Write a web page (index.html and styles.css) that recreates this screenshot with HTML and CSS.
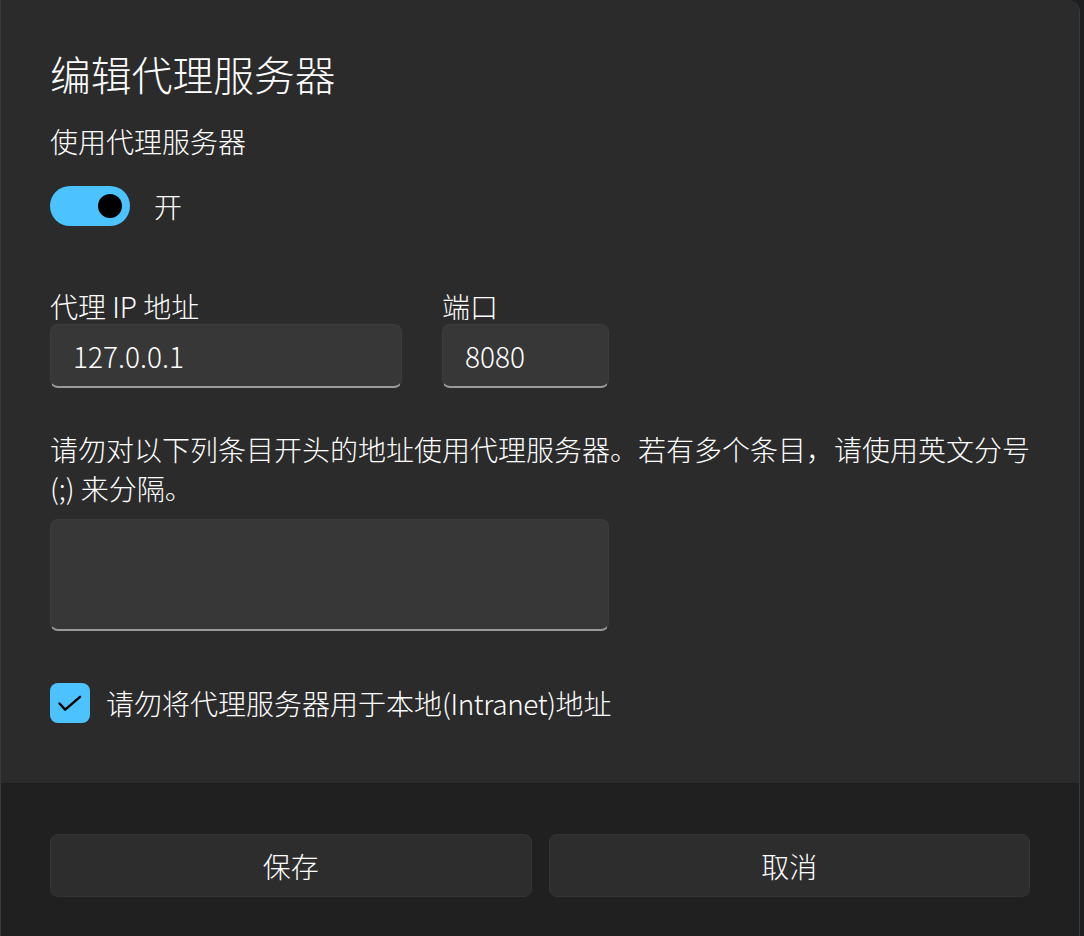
FILE: index.html
```html
<!DOCTYPE html>
<html lang="zh-CN">
<head>
    <meta charset="UTF-8">
    <title>编辑代理服务器</title>
    <link rel="stylesheet" href="styles.css">
</head>
<body>
<div class="dialog">
    <div class="content">
        <div class="title">编辑代理服务器</div>
        <div class="subTitle">使用代理服务器</div>
        <div class="toggleRow">
            <div class="toggle on"><span class="knob"></span></div>
            <span class="toggleText">开</span>
        </div>

        <div class="fields">
            <div class="field">
                <div class="label">代理 IP 地址</div>
                <div class="input ip">127.0.0.1</div>
            </div>
            <div class="field">
                <div class="label">端口</div>
                <div class="input port">8080</div>
            </div>
        </div>

        <div class="desc">请勿对以下列条目开头的地址使用代理服务器。若有多个条目，请使用英文分号 (;) 来分隔。</div>
        <div class="input area"></div>

        <div class="checkRow">
            <div class="checkbox">
                <svg width="40" height="40" viewBox="0 0 40 40">
                    <path d="M9.5 20.5 L15.2 26.6 L30 13.8" fill="none" stroke="#000" stroke-width="2.4" stroke-linecap="round" stroke-linejoin="round"/>
                </svg>
            </div>
            <span class="checkText">请勿将代理服务器用于本地<span class="latin">(Intranet)</span>地址</span>
        </div>
    </div>
    <div class="footer">
        <div class="btn">保存</div>
        <div class="btn">取消</div>
    </div>
</div>
</body>
</html>
```

FILE: styles.css
```css
html, body {
    margin: 0;
    height: 100%;
    background-color: #1b1f1f;
    overflow: hidden;
}

body {
    font-family: "Noto Sans CJK SC", "Noto Sans", sans-serif;
    font-weight: 300;
    color: #ffffff;
}

.dialog {
    width: 1078px;
    height: 100%;
    display: flex;
    flex-direction: column;
    background-color: #2b2b2b;
    border-left: 1px solid #3a3a3a;
    border-right: 1px solid #3a3a3a;
    border-top-right-radius: 12px;
    overflow: hidden;
}

.content {
    padding: 48px 49px 60px 49px;
}

.title {
    font-size: 40.8px;
    line-height: 52px;
}

.subTitle {
    margin-top: 21px;
    font-size: 28px;
    line-height: 40px;
}

.toggleRow {
    display: flex;
    align-items: center;
    gap: 24px;
    margin-top: 25px;
}

.toggle {
    width: 80px;
    height: 40px;
    border-radius: 20px;
    background-color: #4cc2ff;
    display: flex;
    align-items: center;
    justify-content: flex-end;
    padding-right: 8px;
    box-sizing: border-box;
}

.knob {
    width: 24px;
    height: 24px;
    border-radius: 50%;
    background-color: #000000;
}

.toggleText {
    font-size: 28px;
    line-height: 40px;
}

.fields {
    display: flex;
    gap: 40px;
    margin-top: 62px;
}

.label {
    font-size: 28px;
    line-height: 36px;
}

.input {
    box-sizing: border-box;
    height: 64px;
    padding-left: 22px;
    display: flex;
    align-items: center;
    font-size: 28px;
    background-color: #373737;
    border: 1px solid #3c3c3c;
    border-bottom: 2px solid #9a9a9a;
    border-radius: 8px;
}

.ip {
    width: 352px;
}

.port {
    width: 167px;
}

.desc {
    margin-top: 42px;
    font-size: 28px;
    line-height: 39px;
}

.area {
    width: 559px;
    height: 112px;
    margin-top: 11px;
}

.checkRow {
    display: flex;
    align-items: center;
    gap: 16px;
    margin-top: 52px;
}

.checkbox {
    width: 40px;
    height: 40px;
    border-radius: 8px;
    background-color: #4cc2ff;
}

.checkbox svg {
    display: block;
}

.checkText {
    font-size: 28px;
    line-height: 40px;
}

.checkText .latin {
    letter-spacing: -0.4px;
}

.footer {
    flex: 1;
    display: flex;
    gap: 17px;
    padding: 50px 49px 0 49px;
    background-color: #202020;
    border-top: 1px solid #1d1d1d;
}

.btn {
    flex: 1;
    height: 63px;
    box-sizing: border-box;
    display: flex;
    align-items: center;
    justify-content: center;
    font-size: 28px;
    background-color: #2d2d2d;
    border: 1px solid #353535;
    border-radius: 8px;
}
```
